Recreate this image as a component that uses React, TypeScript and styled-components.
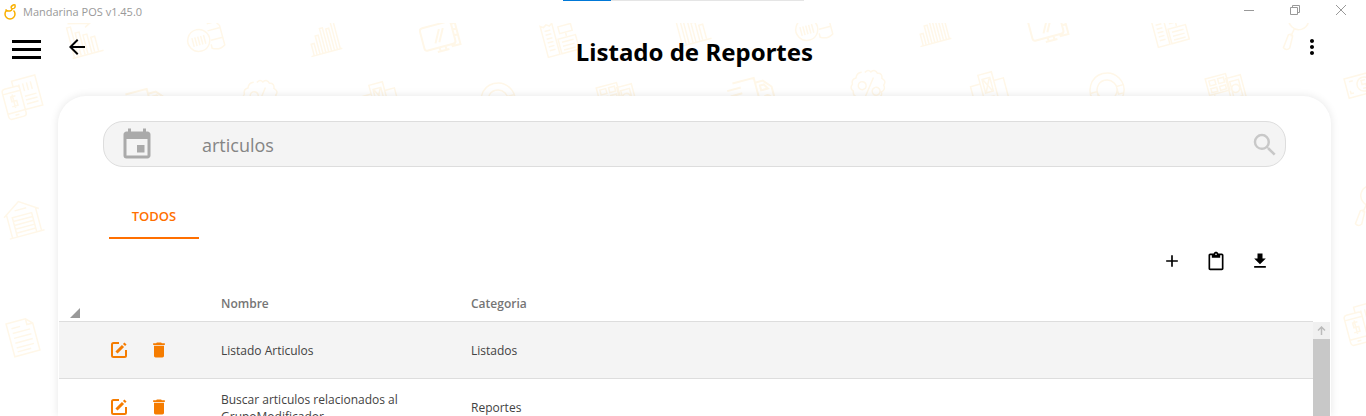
import React from 'react';
import styled, { createGlobalStyle } from 'styled-components';
import { MdEvent, MdSearch, MdAdd, MdContentPaste, MdDelete, MdArrowBack, MdMoreVert } from 'react-icons/md';

const GlobalStyle = createGlobalStyle`
  *, *::before, *::after { box-sizing: border-box; }
  body { margin: 0; overflow: hidden; background: #fff; color: #424242; font: 12px/17px 'Open Sans', 'Noto Sans', sans-serif; }
  button { margin: 0; padding: 0; border: 0; background: none; color: inherit; font: inherit; cursor: pointer; }
`;

const Window = styled.div`
  position: relative;
  display: flex;
  flex-direction: column;
  height: 100vh;
  overflow: hidden;
`;

const Backdrop = styled.svg`
  position: absolute;
  inset: 0;
  width: 100%;
  height: 100%;
  fill: none;
  stroke: #fff7e8;
  stroke-width: 1.5;
`;

const LoadingTrack = styled.div`
  position: absolute;
  top: 0;
  left: 50%;
  width: 241px;
  height: 1px;
  margin-left: -120px;
  background: linear-gradient(to right, #0078d7 20%, #e5e5e5 20%);
`;

const TitleBar = styled.div`
  position: relative;
  display: flex;
  flex: none;
  align-items: center;
  height: 23px;
  padding-left: 3px;
  background: #fff;
  color: #999;
  font-size: 11px;
`;

const AppName = styled.span`
  flex: 1;
  margin-left: 6px;
`;

const WindowButton = styled.button`
  display: grid;
  place-items: center;
  width: 46px;
  height: 20px;
`;

const WindowButtons = styled.div`
  display: flex;
  align-self: flex-start;
  padding-right: 2px;
`;

const AppBar = styled.header`
  position: relative;
  display: flex;
  flex: none;
  align-items: flex-start;
  height: 73px;
  padding: 12px 42px 0 12px;
  color: #000;
`;

const BarButton = styled.button`
  display: grid;
  place-items: center;
  height: 24px;
`;

const MenuButton = styled(BarButton)`
  width: 29px;
  margin: 2px 24px 0 0;
`;

const Title = styled.h1`
  flex: 1;
  margin: 0;
  text-align: center;
  font-family: 'Noto Sans', 'Open Sans', sans-serif;
  font-size: 24px;
  line-height: 34px;
  font-weight: 700;
`;

const Card = styled.main`
  position: relative;
  display: flex;
  flex: 1;
  flex-direction: column;
  min-height: 0;
  margin: 0 35px 0 58px;
  padding: 25px 1px 0;
  border-radius: 28px 28px 0 0;
  background: #fff;
  box-shadow: 0 0 8px rgba(0, 0, 0, 0.1);
`;

const SearchBox = styled.label`
  display: flex;
  flex: none;
  align-items: center;
  height: 46px;
  margin: 0 44px;
  padding: 2px 5px 0 15px;
  border: 1px solid #ddd;
  border-radius: 20px;
  background: #f4f4f4;
  color: #aaa;
`;

const SearchInput = styled.input`
  flex: 1;
  min-width: 0;
  margin-left: 47px;
  padding: 0;
  border: 0;
  outline: 0;
  background: none;
  color: #858585;
  font: 18px/24px 'Open Sans', 'Noto Sans', sans-serif;
`;

const SearchButton = styled.button`
  display: grid;
  color: #c8c8c8;
`;

const Tabs = styled.div`
  display: flex;
  flex: none;
  padding: 26px 50px 0;
`;

const Tab = styled.button`
  width: 90px;
  height: 46px;
  padding-top: 2px;
  border-bottom: 2px solid #ff6f00;
  color: #ff6f00;
  font-size: 13px;
  font-weight: 600;
`;

const Toolbar = styled.div`
  display: flex;
  flex: none;
  justify-content: flex-end;
  gap: 24px;
  padding: 12px 60px 0;
  color: #000;
`;

const IconButton = styled.button`
  display: grid;
  place-items: center;
  width: 20px;
  height: 20px;
`;

const Grid = styled.div`
  display: flex;
  flex: 1;
  min-height: 0;
  margin-top: 13px;
`;

const Table = styled.table`
  flex: 1;
  align-self: flex-start;
  table-layout: fixed;
  border-collapse: collapse;
`;

const ActionsCol = styled.col` width: 150px; `;
const NameCol = styled.col` width: 250px; `;

const HeadCell = styled.th`
  height: 37px;
  padding: 2px 12px 0;
  border-bottom: 1px solid #ddd;
  color: #757575;
  font-weight: 600;
  text-align: left;
`;

const Row = styled.tr<{ $selected?: boolean }>`
  background: ${(p) => (p.$selected ? '#f4f4f4' : '#fff')};
`;

const Cell = styled.td`
  height: 57px;
  padding: 0 12px;
  border-bottom: 1px solid #ddd;
`;

const CellText = styled.div`
  max-width: 190px;
  padding-top: 2px;
`;

const Actions = styled.div`
  display: flex;
  gap: 20px;
  padding-left: 38px;
  color: #f57c00;
`;

const SortMark = styled.svg`
  display: block;
  margin: 20px 0 0 -1px;
`;

const Scrollbar = styled.div`
  flex: none;
  width: 17px;
  margin-top: 38px;
  background: #c8c8c8;
`;

const ScrollUp = styled.button`
  display: grid;
  place-items: center;
  width: 17px;
  height: 17px;
  background: #f0f0f0;
`;

/* Line drawings of the backdrop, each centred on its own origin. */
const doodles: Record<string, React.ReactNode> = {
  trend: <path d="M-16 16H16M-14 15V-15h4V15M-7 15V-8h4V15M0 15V-4h4V15M7 15V0h4V15M-12-19L9-14M5-19l5 5-6 3" />,
  bars: <path d="M-16 15H16M-13 15V3h3V15M-7 15V-4h3V15M-1 15V-10h3V15M5 15V-8h3V15M11 15V-14h3V15" />,
  product: <path d="M-6-9a11 11 0 1 0 .1 0M-12-2v9M-9-2v9M-6-2v9M-3-2v9M0-2v9M7-17h8v5l3 5v20q-6 4-13 0v-4M6-12h9M5-5h13M6 5h12" />,
  monitor: <path strokeWidth="2" d="M-15-13H11q3 0 3 3V7q0 3-3 3H-15q-3 0-3-3V-10q0-3 3-3zM-6 5L1-8M-2 5L5-8M-6 14H6M-3 10v4M3 10v4M4-17h14V12h-9M14-10h4M14-4h4M14 2h4" />,
  register: <path d="M-15-17l3 2 3-2 3 2 3-2V15H-15zM-12-11h6M-12-7h6M-12-3h6M-12 1h6M-12 5h6M-12 9h6M2-12H15v7H2zM8-5v4M-1 0H17V15H-1zM2 4h12M2 8h12M2 12h12" />,
  search: <path d="M6-18a10 10 0 1 0 .1 0M0-1L-6 6M-8 4q3-1 4 2L-10 17q-4 2-6-2z" />,
  phone: <path d="M-15-12H-3q3 0 3 3V16q0 3-3 3H-15q-3 0-3-3V-9q0-3 3-3zM-18-7H0V13H-18zM-11 16h4M-6-3h-5v5h5v5h-6M-9-5V9M-6-12v-6H18V13H0M0-13V-5M4-13V-5M8-13V-5M12-13V-5M3 0h12M3 4h12M3 8h12" />,
  truck: <path strokeWidth="2" d="M-16-12H6V12H0M6-7h8l7 8v11h-3M-8 12h-9M-23-6h14M-21 0h12M-23 6h12M10-3h4l3 5h-7zM-4 8a4 4 0 1 0 .1 0M14 8a4 4 0 1 0 .1 0" />,
  percent: <path d="M0-16q4-3 6 1 5-2 6 3 5 1 3 6 4 4 0 7 1 5-4 6 0 5-5 5-3 4-7 1-5 3-7-2-5 0-5-5-5-2-3-7-3-4 1-7 0-5 5-5 2-5 7-4M7-9L-7 9M-6-8a4 4 0 1 0 .1 0M6 1a4 4 0 1 0 .1 0" />,
  cards: <path d="M-7-17H7V16H-7zM-4-12H4V2H-4zM-3-11l6 12M3-11L-3 1M-4 7h8M-4 11h8M-7-8h-10V16H-7M7-8h10V16H7" />,
  headset: <path d="M0-17a17 17 0 1 0 .1 0M0-10a10 10 0 1 0 .1 0M-17-1h7v8h-6M17-1h-7v8h6" />,
  boxes: <path d="M-17-17H4V0H-17zM-14-14h6v5h-6zM-5-14h6v5h-6zM-14-6h6v4h-6zM-5-6h6v4h-6zM3-12H18V14H3zM6-8h9v17H6zM10-4a4 4 0 1 0 .1 0M-12 0V12H3" />,
  money: <path d="M-18-10H18V10H-18zM-14-6h4M0-7a7 7 0 1 0 .1 0M-12 6h-3v-3M2-4h-4v4h4v4h-4" />,
  barn: <path d="M-18-6L0-18 18-6M-15-8V16M15-8V16M-18 16H18M-10 16V-4H10V16M-10 0H10M-10 4H10M-10 8H10M-10 12H10M-6-10H6" />,
  page: <path d="M-13-17H7l6 6V17H-13zM7-17v6h6M-9-11h9M-9-6H9M-9-1H9M-9 4H9M-9 9H9M-9 13H5" />,
};

const placed: [string, number, number][] = [
  ['trend', 84, 39], ['product', 204, 37], ['bars', 323, 38], ['monitor', 440, 37], ['register', 559, 39],
  ['trend', 692, 27], ['product', 812, 26], ['bars', 932, 28], ['monitor', 1048, 27], ['register', 1169, 29], ['search', 1295, 29],
  ['phone', 22, 97], ['truck', 144, 102], ['percent', 261, 98], ['cards', 380, 100], ['headset', 498, 100], ['boxes', 617, 100],
  ['truck', 751, 91], ['percent', 869, 88], ['cards', 989, 90], ['headset', 1107, 90], ['boxes', 1226, 91], ['money', 1364, 84],
  ['barn', 23, 219], ['page', 23, 337], ['search', 1367, 205], ['phone', 1364, 323],
];

const EditIcon = () => (
  <svg width="20" height="20" viewBox="0 0 20 20" fill="none" stroke="currentColor" strokeWidth="2">
    <path d="M10 3H4.500Q3 3 3 4.500V15.500Q3 17 4.500 17H15.500Q17 17 17 15.500V10" />
    <path d="M7.500 12.500L14 6" strokeWidth="3" />
    <path d="M15 5l1.500-1.500" strokeWidth="3" />
  </svg>
);

const rows = [
  { name: 'Listado Articulos', category: 'Listados' },
  { name: 'Buscar articulos relacionados al GrupoModificador', category: 'Reportes' },
];

export default function App() {
  return (
    <Window>
      <GlobalStyle />
      <Backdrop viewBox="0 0 1366 416" preserveAspectRatio="xMidYMin slice" aria-hidden="true">
        {placed.map(([kind, x, y]) => (
          <g key={`${kind}-${x}`} transform={`translate(${x} ${y}) rotate(-15)`}>{doodles[kind]}</g>
        ))}
      </Backdrop>
      <TitleBar>
        <svg width="14" height="18" viewBox="0 0 14 18" fill="none" stroke="#f9b000" strokeWidth="1.500" aria-hidden="true">
          <path d="M3.500 7.500A5 5 0 1 0 10.500 7.500M2.500 6.500Q4 8.500 7 8Q9 7.500 9 6M8.500 5.500Q7.500 3.500 9.500 2.500Q10.500 1.500 12 2Q12.500 4 11.500 5Q10 6 8.500 5.500" />
        </svg>
        <AppName>Mandarina POS v1.45.0</AppName>
        <WindowButtons>
          <WindowButton aria-label="Minimizar">
            <svg width="10" height="10" stroke="#999"><path d="M0 5.500H10" /></svg>
          </WindowButton>
          <WindowButton aria-label="Restaurar">
            <svg width="10" height="10" fill="none" stroke="#999"><path d="M.5 2.500H7.500V9.500H.5zM2.500 2.500V.5H9.500V7.500H7.500" /></svg>
          </WindowButton>
          <WindowButton aria-label="Cerrar">
            <svg width="10" height="10" stroke="#999"><path d="M0 0L10 10M10 0L0 10" /></svg>
          </WindowButton>
        </WindowButtons>
        <LoadingTrack />
      </TitleBar>
      <AppBar>
        <MenuButton aria-label="Menú">
          <svg width="29" height="20" stroke="currentColor" strokeWidth="3"><path d="M0 2.500H29M0 10.500H29M0 18.500H29" /></svg>
        </MenuButton>
        <BarButton aria-label="Volver"><MdArrowBack size={24} /></BarButton>
        <Title>Listado de Reportes</Title>
        <BarButton aria-label="Más opciones"><MdMoreVert size={24} /></BarButton>
      </AppBar>
      <Card>
        <SearchBox>
          <MdEvent size={36} />
          <SearchInput type="text" aria-label="Buscar reportes" defaultValue="articulos" />
          <SearchButton aria-label="Buscar"><MdSearch size={30} /></SearchButton>
        </SearchBox>
        <Tabs role="tablist">
          <Tab role="tab" aria-selected="true">TODOS</Tab>
        </Tabs>
        <Toolbar>
          <IconButton aria-label="Agregar"><MdAdd size={20} /></IconButton>
          <IconButton aria-label="Pegar">
            <svg width="20" height="20" viewBox="0 -1 24 24" fill="currentColor"><path d="M19 2h-4.180C14.400.84 13.300 0 12 0c-1.300 0-2.400.84-2.820 2H5c-1.100 0-2 .9-2 2v16c0 1.100.9 2 2 2h14c1.100 0 2-.9 2-2V4c0-1.100-.9-2-2-2zm-7 0c.55 0 1 .45 1 1s-.45 1-1 1-1-.45-1-1 .45-1 1-1zm7 18H5V4h2v3h10V4h2v16z" /></svg>
          </IconButton>
          <IconButton aria-label="Descargar">
            <svg width="20" height="20" viewBox="0 0 24 24" fill="currentColor"><path d="M19 9h-4V3H9v6H5l7 7 7-7zM5 18v2h14v-2H5z" /></svg>
          </IconButton>
        </Toolbar>
        <Grid>
          <Table>
            <colgroup><ActionsCol /><NameCol /><col /></colgroup>
            <thead>
              <tr>
                <HeadCell aria-label="Acciones">
                  <SortMark width="10" height="10" fill="#999"><path d="M10 0V10H0z" /></SortMark>
                </HeadCell>
                <HeadCell>Nombre</HeadCell>
                <HeadCell>Categoria</HeadCell>
              </tr>
            </thead>
            <tbody>
              {rows.map((row, i) => (
                <Row key={row.name} $selected={i === 0}>
                  <Cell>
                    <Actions>
                      <IconButton aria-label="Editar"><EditIcon /></IconButton>
                      <IconButton aria-label="Eliminar"><MdDelete size={20} /></IconButton>
                    </Actions>
                  </Cell>
                  <Cell><CellText>{row.name}</CellText></Cell>
                  <Cell><CellText>{row.category}</CellText></Cell>
                </Row>
              ))}
            </tbody>
          </Table>
          <Scrollbar>
            <ScrollUp aria-label="Subir">
              <svg width="9" height="9" fill="none" stroke="#bbb" strokeWidth="1.500"><path d="M4.500 9V1M1 4.500L4.500 1 8 4.500" /></svg>
            </ScrollUp>
          </Scrollbar>
        </Grid>
      </Card>
    </Window>
  );
}
